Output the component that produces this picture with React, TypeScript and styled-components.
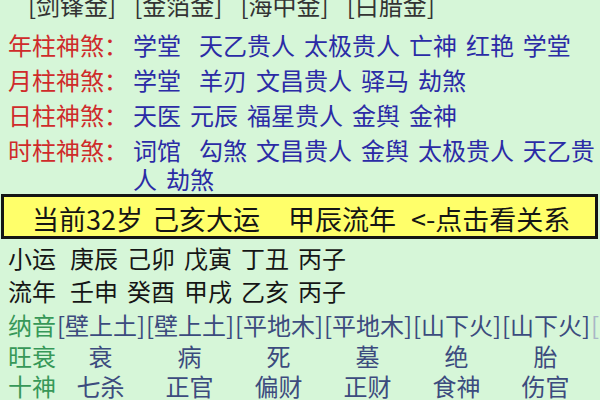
import React from "react";
import styled, { createGlobalStyle } from "styled-components";

const Global = createGlobalStyle`
  html, body { margin: 0; padding: 0; background: #d6f6d8; }
  * { box-sizing: border-box; }
`;

const Page = styled.div`
  width: 600px;
  height: 400px;
  overflow: hidden;
  background: #d6f6d8;
  font-family: "Noto Sans CJK SC", "Noto Sans", sans-serif;
  font-size: 24px;
`;

const Inner = styled.div`
  margin-top: -10px;
  display: flex;
  flex-direction: column;
`;

const TopRow = styled.div`
  display: flex;
  gap: 18px;
  padding-left: 28px;
  line-height: 29px;
  color: #333;
  white-space: nowrap;
`;

const ShenshaList = styled.div`
  display: flex;
  flex-direction: column;
  gap: 6px;
  margin-top: 11px;
`;

const ShenshaRow = styled.div`
  display: grid;
  grid-template-columns: 120px 1fr;
  column-gap: 5px;
  padding-left: 8px;
  line-height: 29px;
`;

const ShenshaLabel = styled.span`
  color: #cf2b2b;
  white-space: nowrap;
`;

const ShenshaValue = styled.span`
  color: #2b2ba6;
  white-space: pre-wrap;
  word-spacing: 3.6px;
`;

const Banner = styled.div`
  margin: 1px 2px 0 1px;
  border: 3px solid #151515;
  background: #ffff6a;
  padding: 5px 0 0 28px;
  height: 45px;
  display: flex;
  align-items: flex-start;
  font-size: 27px;
  line-height: 34px;
  color: #151515;
  white-space: nowrap;
  cursor: pointer;
`;

const BannerSeg = styled.span<{ $gap: number }>`
  margin-left: ${(p) => p.$gap}px;
`;

const YunRow = styled.div<{ $top: number }>`
  display: flex;
  gap: 9px;
  padding-left: 8px;
  margin-top: ${(p) => p.$top}px;
  line-height: 33px;
  color: #161616;
  white-space: nowrap;
`;

const YunLabel = styled.span`
  margin-right: 5px;
`;

const GridRow = styled.div<{ $lh: number; $top?: number }>`
  display: grid;
  grid-template-columns: 48px repeat(7, 89px);
  padding-left: 8px;
  margin-top: ${(p) => p.$top ?? 0}px;
  line-height: ${(p) => p.$lh}px;
  white-space: nowrap;
  overflow: hidden;
`;

const GreenLabel = styled.span`
  color: #379858;
`;

const Cell = styled.span`
  text-align: center;
  color: #3c4b7e;
`;

const NaCell = styled.span<{ $faint?: boolean }>`
  text-align: left;
  padding-left: 1px;
  color: ${(p) => (p.$faint ? "#a9b6c6" : "#3c4b7e")};
`;

const nayinTop = ["[剑锋金]", "[金箔金]", "[海中金]", "[白腊金]"];

const shensha = [
  { label: "年柱神煞：", value: "学堂  天乙贵人 太极贵人 亡神 红艳 学堂" },
  { label: "月柱神煞：", value: "学堂  羊刃 文昌贵人 驿马 劫煞" },
  { label: "日柱神煞：", value: "天医 元辰 福星贵人 金舆 金神" },
  { label: "时柱神煞：", value: "词馆  勾煞 文昌贵人 金舆 太极贵人 天乙贵人 劫煞" },
];

const xiaoyun = ["庚辰", "己卯", "戊寅", "丁丑", "丙子"];
const liunian = ["壬申", "癸酉", "甲戌", "乙亥", "丙子"];
const nayin = ["[壁上土]", "[壁上土]", "[平地木]", "[平地木]", "[山下火]", "[山下火]"];
const wangshuai = ["衰", "病", "死", "墓", "绝", "胎"];
const shishen = ["七杀", "正官", "偏财", "正财", "食神", "伤官"];

export default function App() {
  return (
    <Page>
      <Global />
      <Inner>
        <TopRow>
          {nayinTop.map((n) => (
            <span key={n}>{n}</span>
          ))}
        </TopRow>
        <ShenshaList>
          {shensha.map((s) => (
            <ShenshaRow key={s.label}>
              <ShenshaLabel>{s.label}</ShenshaLabel>
              <ShenshaValue>{s.value}</ShenshaValue>
            </ShenshaRow>
          ))}
        </ShenshaList>
        <Banner>
          <BannerSeg $gap={0}>当前32岁</BannerSeg>
          <BannerSeg $gap={9}>己亥大运</BannerSeg>
          <BannerSeg $gap={28}>甲辰流年</BannerSeg>
          <BannerSeg $gap={15}>&lt;-点击看关系</BannerSeg>
        </Banner>
        <YunRow $top={2}>
          <YunLabel>小运</YunLabel>
          {xiaoyun.map((x, i) => (
            <span key={i}>{x}</span>
          ))}
        </YunRow>
        <YunRow $top={0}>
          <YunLabel>流年</YunLabel>
          {liunian.map((x, i) => (
            <span key={i}>{x}</span>
          ))}
        </YunRow>
        <GridRow $lh={31} $top={2}>
          <GreenLabel>纳音</GreenLabel>
          {nayin.map((n, i) => (
            <NaCell key={i}>{n}</NaCell>
          ))}
          <NaCell $faint>[</NaCell>
        </GridRow>
        <GridRow $lh={31}>
          <GreenLabel>旺衰</GreenLabel>
          {wangshuai.map((n, i) => (
            <Cell key={i}>{n}</Cell>
          ))}
        </GridRow>
        <GridRow $lh={30}>
          <GreenLabel>十神</GreenLabel>
          {shishen.map((n, i) => (
            <Cell key={i}>{n}</Cell>
          ))}
        </GridRow>
      </Inner>
    </Page>
  );
}
